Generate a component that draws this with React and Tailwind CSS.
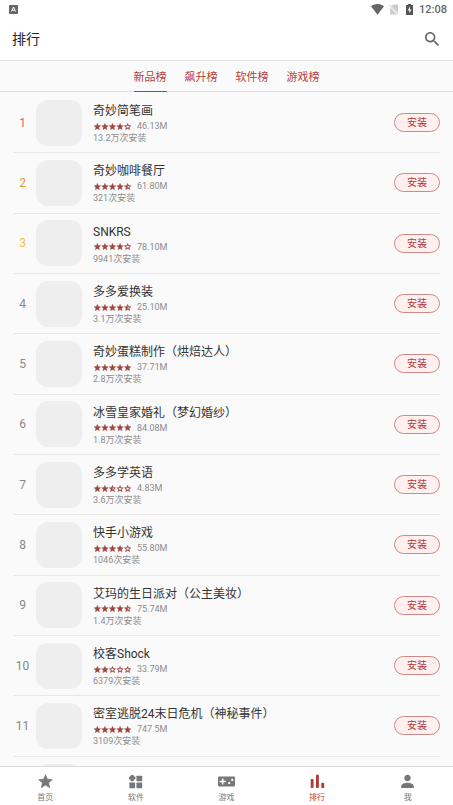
import React, { useState } from "react";

const STAR =
  "M12 17.27 18.18 21l-1.64-7.03L22 9.24l-7.19-.61L12 2 9.19 8.63 2 9.24l5.46 4.73L5.82 21z";
const STAR_BORDER =
  "M22 9.24l-7.19-.62L12 2 9.19 8.63 2 9.24l5.46 4.73L5.82 21 12 17.27 18.18 21l-1.63-7.03L22 9.24zM12 15.4l-3.76 2.27 1-4.28-3.32-2.88 4.38-.38L12 6.1l1.71 4.04 4.38.38-3.32 2.88 1 4.28L12 15.4z";
const STAR_HALF =
  "M22 9.24l-7.19-.62L12 2 9.19 8.63 2 9.24l5.46 4.73L5.82 21 12 17.27 18.18 21l-1.63-7.03L22 9.24zM12 15.4V6.1l1.71 4.04 4.38.38-3.32 2.88 1 4.28L12 15.4z";

const apps = [
  { name: "奇妙简笔画", stars: 4, size: "46.13M", installs: "13.2万次安装" },
  { name: "奇妙咖啡餐厅", stars: 4.5, size: "61.80M", installs: "321次安装" },
  { name: "SNKRS", stars: 4, size: "78.10M", installs: "9941次安装" },
  { name: "多多爱换装", stars: 4.5, size: "25.10M", installs: "3.1万次安装" },
  { name: "奇妙蛋糕制作（烘焙达人）", stars: 5, size: "37.71M", installs: "2.8万次安装" },
  { name: "冰雪皇家婚礼（梦幻婚纱）", stars: 5, size: "84.08M", installs: "1.8万次安装" },
  { name: "多多学英语", stars: 2.5, size: "4.83M", installs: "3.6万次安装" },
  { name: "快手小游戏", stars: 4, size: "55.80M", installs: "1046次安装" },
  { name: "艾玛的生日派对（公主美妆）", stars: 4.5, size: "75.74M", installs: "1.4万次安装" },
  { name: "校客Shock", stars: 2, size: "33.79M", installs: "6379次安装" },
  { name: "密室逃脱24末日危机（神秘事件）", stars: 5, size: "747.5M", installs: "3109次安装" },
];

const rankColors = ["text-[#ec5b5b]", "text-[#dd9a33]", "text-[#f3bf35]"];
const tabs = ["新品榜", "飙升榜", "软件榜", "游戏榜"];

const navItems = [
  { label: "首页", icon: <path d={STAR} stroke="currentColor" strokeWidth="1" strokeLinejoin="round" /> },
  {
    label: "软件",
    icon: (
      <>
        <circle cx="7.200" cy="4.600" r="2.600" />
        <circle cx="7.200" cy="9.400" r="2.600" />
        <circle cx="4.800" cy="7" r="2.600" />
        <circle cx="9.600" cy="7" r="2.600" />
        <rect x="13.400" y="3.400" width="8.400" height="8.400" rx="1" />
        <rect x="3" y="13.400" width="8.400" height="8.400" rx="1" />
        <rect x="13.400" y="13.400" width="8.400" height="8.400" rx="1" />
      </>
    ),
  },
  {
    label: "游戏",
    icon: (
      <path d="M21.500 5.500h-19C1.700 5.500 1 6.200 1 7v10c0 .8.700 1.500 1.500 1.500h19c.8 0 1.500-.7 1.500-1.500V7c0-.8-.7-1.500-1.500-1.500zM11 13H8v3H6v-3H3v-2h3V8h2v3h3v2zm4.500 2.500c-.83 0-1.500-.67-1.500-1.500s.67-1.500 1.500-1.500 1.500.67 1.500 1.500-.67 1.500-1.500 1.500zm4-4c-.83 0-1.500-.67-1.500-1.500s.67-1.500 1.500-1.500 1.500.67 1.500 1.500-.67 1.500-1.500 1.500z" />
    ),
    wide: true,
  },
  {
    label: "排行",
    icon: (
      <>
        <rect x="2" y="8.500" width="4.200" height="13" rx="1" />
        <rect x="9.800" y="2" width="4.200" height="19.500" rx="1" />
        <rect x="17.600" y="14" width="4.200" height="7.500" rx="1" />
      </>
    ),
    active: true,
  },
  {
    label: "我",
    icon: <path d="M12 11.500c2.630 0 4.750-2.130 4.750-4.750S14.630 2 12 2 7.250 4.130 7.250 6.750 9.370 11.500 12 11.500zm0 2.500c-3.100 0-9.200 1.600-9.200 4.700v2.800h18.400v-2.800c0-3.100-6.100-4.700-9.200-4.700z" />,
  },
];

function Stars({ value }) {
  return (
    <svg viewBox="2 2 110 19" className="ml-px h-[7px] w-[37px] fill-[#a04640]" role="img" aria-label={`${value} / 5`}>
      {[0, 1, 2, 3, 4].map((i) => (
        <path
          key={i}
          transform={`translate(${i * 22.5} 0)`}
          stroke="#a04640"
          strokeWidth="1"
          d={value >= i + 1 ? STAR : value > i ? STAR_HALF : STAR_BORDER}
        />
      ))}
    </svg>
  );
}

function StatusBar() {
  return (
    <div className="flex h-[18px] items-center justify-between pt-px pl-[9px] pr-[6px] text-[#666]">
      <svg viewBox="0 0 18 18" className="size-[9px]">
        <rect width="18" height="18" rx="2" fill="#666" />
        <path d="M5 13 9 4l4 9M6.500 10.500h5" fill="none" stroke="#fff" strokeWidth="2" />
      </svg>
      <div className="flex items-center">
        <svg viewBox="0 0 26 22" className="h-[11px] w-[13px] fill-current">
          <path d="M13 21.500 0 4.500C4 1.500 8.500 0 13 0s9 1.500 13 4.500z" />
        </svg>
        <svg viewBox="0 0 20 22" className="ml-[5px] h-[11px] w-[10px]">
          <path d="M8 1h10v20H2V8z" fill="#ccc" />
          <path d="M1 3l18 18" stroke="#fff" strokeWidth="4" />
          <path d="M1 2l18 18" stroke="#bbb" strokeWidth="1.800" />
        </svg>
        <svg viewBox="0 0 14 22" className="ml-[7px] h-[11px] w-[7px]">
          <path d="M4 0h6v2h4v20H0V2h4z" fill="#555" />
          <path d="M8 5 3.500 13H7v6l4-8H8z" fill="#fff" />
        </svg>
        <span className="ml-[6px] font-['Roboto',sans-serif] text-[11px] leading-[16px] font-medium">12:08</span>
      </div>
    </div>
  );
}

function AppRow({ app, rank }) {
  return (
    <li className="flex min-w-0 items-center border-b border-[#e8e8e8]">
      <span className={`w-[17px] text-center text-[12px] ${rankColors[rank - 1] || "text-[#888]"}`}>{rank}</span>
      <span className="ml-[5px] size-[46px] shrink-0 rounded-[12px] bg-[#eeeeee]" />
      <div className="ml-[11px] min-w-0 flex-1 pt-[2px]">
        <h2 className="truncate text-[12px] leading-[18px] text-[#333]">{app.name}</h2>
        <div className="flex items-center gap-[6px] text-[9px] leading-[12px] text-[#8c8c8c]">
          <Stars value={app.stars} />
          <span>{app.size}</span>
        </div>
        <p className="text-[9px] leading-[13px] text-[#8c8c8c]">{app.installs}</p>
      </div>
      <button
        type="button"
        className="h-[19px] w-[46px] shrink-0 rounded-full border border-[#d08a85] bg-[#ffefee] text-[10px] leading-[17px] text-[#b23a35]"
      >
        安装
      </button>
    </li>
  );
}

export default function App() {
  const [tab, setTab] = useState(0);
  return (
    <div className="flex h-screen flex-col overflow-hidden bg-[#fafafa] font-['Roboto','Noto_Sans_CJK_SC',sans-serif]">
      <header className="shrink-0 border-b border-[#e2e2e2] bg-white">
        <StatusBar />
        <div className="flex h-[42px] items-center justify-between pl-3 pr-[14px]">
          <h1 className="text-[14px] leading-[20px] text-[#222]">排行</h1>
          <button type="button" aria-label="搜索" className="text-[#666]">
            <svg viewBox="3 3 17.500 17.500" className="size-[14px] fill-current">
              <path d="M15.500 14h-.79l-.28-.27C15.410 12.590 16 11.110 16 9.500 16 5.910 13.090 3 9.500 3S3 5.910 3 9.500 5.910 16 9.500 16c1.610 0 3.090-.59 4.230-1.570l.27.28v.79l5 4.990L20.490 19l-4.990-5zm-6 0C7.010 14 5 11.990 5 9.500S7.010 5 9.500 5 14 7.010 14 9.500 11.990 14 9.500 14z" />
            </svg>
          </button>
        </div>
      </header>

      <div role="tablist" className="flex h-[31px] shrink-0 justify-center gap-[18px] border-b border-[#dedede]">
        {tabs.map((t, i) => (
          <button
            key={t}
            type="button"
            role="tab"
            aria-selected={tab === i}
            onClick={() => setTab(i)}
            className={`-mb-px border-b pt-[3px] text-[11px] leading-[27px] text-[#b8403d] ${tab === i ? "border-[#a8433f]" : "border-transparent"}`}
          >
            {t}
          </button>
        ))}
      </div>

      <main className="min-h-0 flex-1 overflow-hidden pt-px">
        <ol className="grid min-h-[724px] auto-rows-fr pr-[13px] pl-[14px]">
          {apps.map((app, i) => (
            <AppRow key={app.name} app={app} rank={i + 1} />
          ))}
          <li className="flex items-center" aria-hidden="true">
            <span className="ml-[22px] size-[46px] rounded-[12px] bg-[#eeeeee]" />
          </li>
        </ol>
      </main>

      <nav className="flex h-[39px] shrink-0 border-t border-[#dcdcdc] bg-white">
        {navItems.map((n) => (
          <a
            key={n.label}
            href="#"
            className={`flex flex-1 flex-col items-center pt-[7px] ${n.active ? "text-[#b23a38]" : "text-[#777]"}`}
          >
            <svg viewBox={n.wide ? "1 3 22 18" : "1 1 22 22"} className={n.wide ? "h-[15px] w-[17px] fill-current" : "h-[15px] w-[15px] fill-current"}>
              {n.icon}
            </svg>
            <span className="mt-[3px] text-[8px] leading-[12px]">{n.label}</span>
          </a>
        ))}
      </nav>
    </div>
  );
}
